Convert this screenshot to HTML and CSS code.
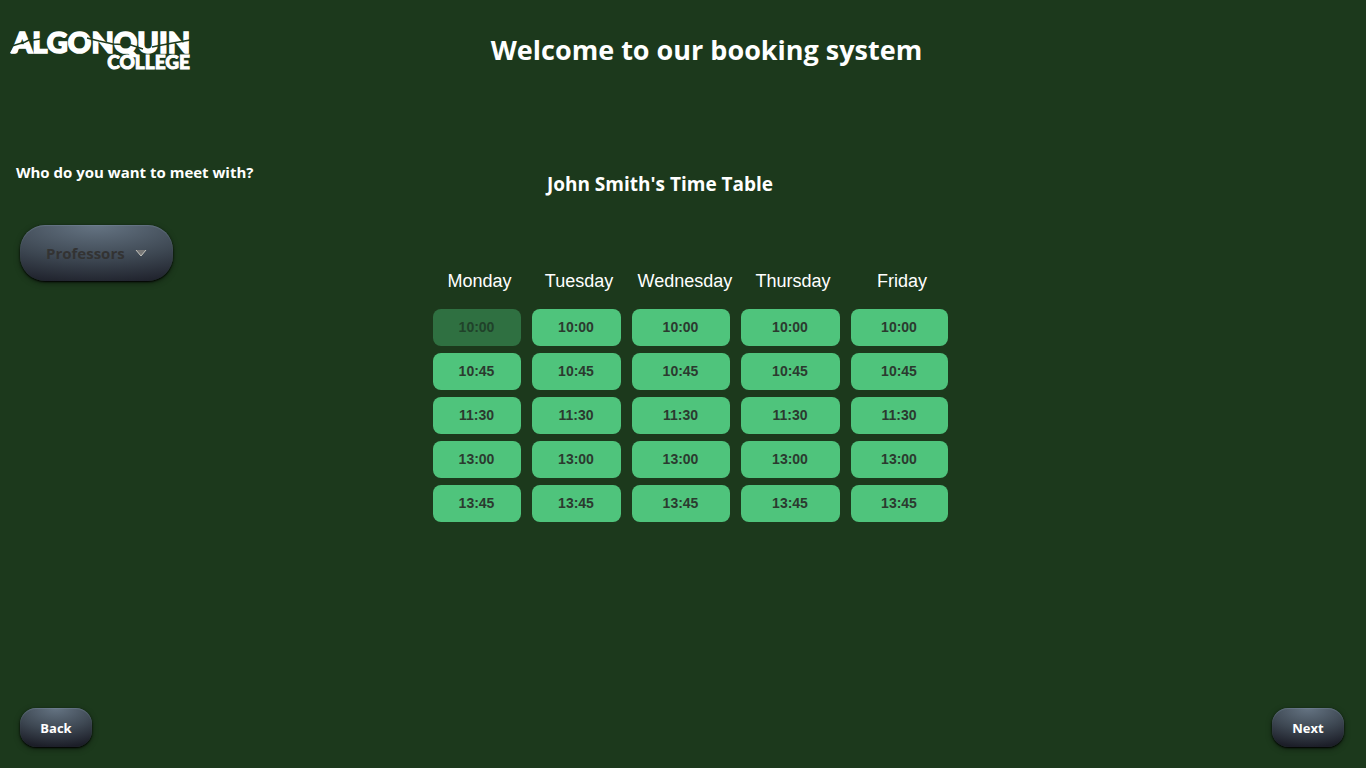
FILE: index.html
```html
<!DOCTYPE html>
<html lang="en">
<head>
<meta charset="utf-8">
<meta name="viewport" content="width=device-width, initial-scale=1">
<title>Algonquin College Booking</title>
<link rel="stylesheet" href="styles.css">
</head>
<body>
<header class="header">
  <svg class="logo" viewBox="0 0 182 44" role="img" aria-label="Algonquin College">
    <text class="logo-name" x="3" y="25">ALGONQUIN</text>
    <text class="logo-sub" x="181" y="41" text-anchor="end">COLLEGE</text>
    <path class="logo-base" d="M1 25 L5 18 L11 17 L8 25Z"/>
    <path class="logo-crack" d="M3 18 L16 14 L22 11 M24 12 L38 10 M78 10 L90 13 L104 16 L122 17 L134 21 M143 19 L153 17 L164 15 L181 12"/>
  </svg>
  <h1 class="title">Welcome to our booking system</h1>
</header>
<main class="main">
  <section class="chooser">
    <label class="question" for="person">Who do you want to meet with?</label>
    <div class="picker">
      <select class="metal picker-select" id="person">
        <option>Professors</option>
      </select>
      <svg class="picker-arrow" viewBox="0 0 12 8" aria-hidden="true"><path d="M1 1H11L6 7Z" fill="#777"/><path d="M1 1L6 7L11 1" fill="none" stroke="#c4c4bd"/></svg>
    </div>
  </section>
  <section class="schedule">
    <h2 class="schedule-title">John Smith's Time Table</h2>
    <table class="timetable">
      <colgroup><col class="col-mon"><col class="col-tue"><col class="col-wed"><col class="col-thu"><col class="col-fri"></colgroup>
      <thead><tr><th scope="col">Monday</th><th scope="col">Tuesday</th><th scope="col">Wednesday</th><th scope="col">Thursday</th><th scope="col">Friday</th></tr></thead>
      <tbody>
        <tr><td><button class="slot" disabled>10:00</button></td><td><button class="slot">10:00</button></td><td><button class="slot">10:00</button></td><td><button class="slot">10:00</button></td><td><button class="slot">10:00</button></td></tr>
        <tr><td><button class="slot">10:45</button></td><td><button class="slot">10:45</button></td><td><button class="slot">10:45</button></td><td><button class="slot">10:45</button></td><td><button class="slot">10:45</button></td></tr>
        <tr><td><button class="slot">11:30</button></td><td><button class="slot">11:30</button></td><td><button class="slot">11:30</button></td><td><button class="slot">11:30</button></td><td><button class="slot">11:30</button></td></tr>
        <tr><td><button class="slot">13:00</button></td><td><button class="slot">13:00</button></td><td><button class="slot">13:00</button></td><td><button class="slot">13:00</button></td><td><button class="slot">13:00</button></td></tr>
        <tr><td><button class="slot">13:45</button></td><td><button class="slot">13:45</button></td><td><button class="slot">13:45</button></td><td><button class="slot">13:45</button></td><td><button class="slot">13:45</button></td></tr>
      </tbody>
    </table>
  </section>
</main>
<footer class="footer">
  <button class="metal nav-button">Back</button>
  <button class="metal nav-button">Next</button>
</footer>
</body>
</html>
```
FILE: styles.css
```css
* { box-sizing: border-box; }
body {
  margin: 0;
  min-height: 100vh;
  display: flex;
  flex-direction: column;
  background: #1c391c;
  color: #fff;
  font-family: "Open Sans", sans-serif;
}
.header {
  display: grid;
  grid-template-columns: 1fr auto 1fr;
  align-items: center;
  height: 100px;
  padding-left: 9px;
}
.logo { width: 182px; height: 44px; }
.logo-name { font: 900 29px Lato, sans-serif; fill: #fff; stroke: #fff; stroke-width: 1.6; }
.logo-sub { font: 900 19px Lato, sans-serif; fill: #fff; stroke: #fff; stroke-width: .9; }
.logo-base { fill: #fff; }
.logo-crack { fill: none; stroke: #1c391c; stroke-width: 1.4; }
.title {
  margin: 0;
  padding-left: 38px;
  font-size: 27px;
  line-height: 36px;
  font-weight: 700;
}
.main {
  flex: 1;
  display: grid;
  grid-template-columns: 1fr auto 1fr;
  align-items: start;
  padding: 60px 2px 24px 16px;
}
.question {
  display: block;
  font-size: 15px;
  line-height: 24px;
  font-weight: 700;
}
.picker {
  display: inline-grid;
  grid-template-columns: 115px 38px;
  align-items: center;
  margin: 41px 0 0 4px;
}
.metal {
  border: 0;
  background: radial-gradient(ellipse 100% 100% at 50% 0, #657483, #3e4853 55%, #1c1e28);
  box-shadow: 0 1px 2px #000, 0 2px 6px rgba(0, 0, 0, .4), inset 0 1px 1px rgba(130, 150, 170, .35);
  font-family: "Open Sans", sans-serif;
  font-weight: 700;
  cursor: pointer;
}
.picker-select {
  grid-area: 1 / 1 / 2 / 3;
  appearance: none;
  height: 56px;
  padding: 0 26px;
  border-radius: 25px;
  background-image: radial-gradient(ellipse 120% 110% at 50% 0, #657483, #3e4853 55%, #1c1e28);
  color: #333;
  font-size: 15px;
}
.picker-arrow {
  grid-area: 1 / 2;
  width: 12px;
  height: 8px;
  z-index: 1;
  pointer-events: none;
}
.schedule-title {
  margin: 12px 60px 61px 0;
  font-size: 19px;
  line-height: 24px;
  font-weight: 700;
  text-align: center;
}
.timetable {
  width: 537px;
  table-layout: fixed;
  border-spacing: 11px 7px;
}
.col-mon { width: 88px; }
.col-tue { width: 89px; }
.col-wed { width: 98px; }
.col-thu { width: 99px; }
.col-fri { width: 97px; }
.timetable th {
  height: 38px;
  padding: 0 0 4px 6px;
  font: 400 18px "Liberation Sans", Arial, sans-serif;
  white-space: nowrap;
}
.timetable td { padding: 0; }
.slot {
  display: block;
  width: 100%;
  height: 37px;
  padding: 0 0 2px;
  border: 0;
  border-radius: 8px;
  background: #4fc47c;
  color: #2b3a2f;
  font: 700 14px "Liberation Sans", Arial, sans-serif;
  cursor: pointer;
}
.slot:disabled { background: #2f7041; color: #20422a; cursor: default; }
.footer {
  display: flex;
  justify-content: space-between;
  padding: 0 22px 21px 20px;
}
.nav-button {
  width: 72px;
  height: 39px;
  padding: 0;
  border-radius: 16px;
  color: #fff;
  font-size: 13px;
}
```
